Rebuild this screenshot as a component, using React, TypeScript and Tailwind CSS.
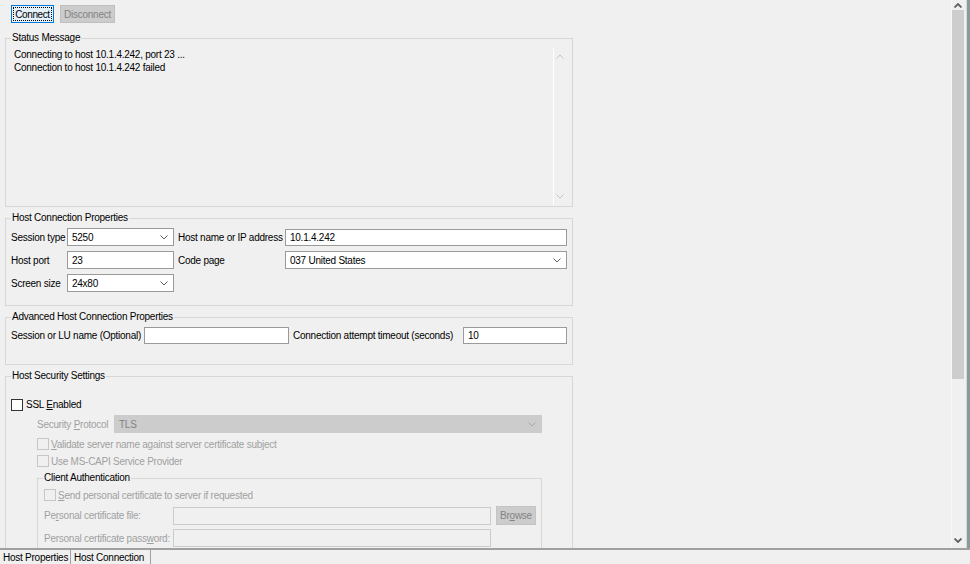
import React from 'react';

const FONT = { fontFamily: '"Liberation Sans", Arial, sans-serif' };

const Chevron: React.FC<{ up?: boolean; color?: string; bold?: boolean }> = ({ up, color = '#606060', bold }) => (
  <svg width="8" height="5" viewBox="0 0 8 5" className="block">
    <path
      d={up ? 'M0.5 4.5 L4 1 L7.5 4.5' : 'M0.5 0.5 L4 4 L7.5 0.5'}
      fill="none"
      stroke={color}
      strokeWidth={bold ? 1.8 : 1}
    />
  </svg>
);

const Select: React.FC<{ value: string; className: string; disabled?: boolean }> = ({ value, className, disabled }) => (
  <div
    className={
      'flex items-center justify-between pl-[4px] pr-[5px] border ' +
      (disabled ? 'bg-[#cccccc] border-[#cccccc] text-[#838383] ' : 'bg-white border-[#9a9a9a] ') +
      className
    }
  >
    <span>{value}</span>
    <Chevron color={disabled ? '#a8a8a8' : '#606060'} />
  </div>
);

const Input: React.FC<{ value?: string; className: string; disabled?: boolean }> = ({ value, className, disabled }) => (
  <div
    className={
      'flex items-center pl-[4px] border ' +
      (disabled ? 'bg-[#f0f0f0] border-[#cccccc] ' : 'bg-white border-[#9a9a9a] ') +
      className
    }
  >
    {value}
  </div>
);

const Check: React.FC<{ disabled?: boolean }> = ({ disabled }) => (
  <div
    className={
      'w-[12px] h-[12px] border shrink-0 ' +
      (disabled ? 'border-[#c6c6c6] bg-[#f0f0f0]' : 'border-[#333333] bg-white')
    }
  />
);

const Group: React.FC<{ title: string; className?: string; children: React.ReactNode }> = ({ title, className, children }) => (
  <fieldset className={'border border-[#d7d7d7] ' + (className || '')}>
    <legend className="ml-[5px] px-[1px] leading-[14px]">{title}</legend>
    {children}
  </fieldset>
);

export default function App() {
  return (
    <div className="w-[970px] h-[564px] flex flex-col bg-[#f0f0f0] text-black text-[10px] tracking-[-0.25px] whitespace-nowrap overflow-hidden" style={FONT}>
      <div className="flex flex-1 min-h-0">
        {/* main content */}
        <div className="w-[951px] overflow-hidden pl-[5px]">
          <div className="flex gap-[6px] mt-[5px] ml-[6px] h-[18px]">
            <div className="w-[43px] h-[18px] border border-[#0078d7] bg-[#e5f1fb] p-[1px]">
              <div className="w-full h-full border border-dotted border-black flex items-center justify-center tracking-[-0.4px]">
                Connect
              </div>
            </div>
            <div className="w-[55px] h-[18px] border border-[#bfbfbf] bg-[#cccccc] text-[#838383] flex items-center justify-center">
              Disconnect
            </div>
          </div>

          <Group title="Status Message" className="w-[568px] mt-[8px]">
            <div className="flex h-[161px]">
              <div className="flex-1 pl-[8px] pt-[3px] leading-[13px]">
                <div>Connecting to host 10.1.4.242, port 23 ...</div>
                <div>Connection to host 10.1.4.242 failed</div>
              </div>
              <div className="w-[12px] mr-[7px] mt-[3px] mb-[1px] border-l border-white flex flex-col items-center justify-between py-[6px]">
                <Chevron up color="#c4c4c4" />
                <Chevron color="#c4c4c4" />
              </div>
            </div>
          </Group>

          <Group title="Host Connection Properties" className="w-[568px] mt-[4px]">
            <div className="h-[80px] pl-[5px] pt-[3px] flex flex-col gap-[5px]">
              <div className="flex items-center h-[18px]">
                <div className="w-[56px]">Session type</div>
                <Select value="5250" className="w-[107px] h-[18px]" />
                <div className="w-[107px] ml-[4px]">Host name or IP address</div>
                <Input value="10.1.4.242" className="w-[282px] h-[17px]" />
              </div>
              <div className="flex items-center h-[18px]">
                <div className="w-[56px]">Host port</div>
                <Input value="23" className="w-[107px] h-[18px]" />
                <div className="w-[107px] ml-[4px]">Code page</div>
                <Select value="037 United States" className="w-[282px] h-[18px]" />
              </div>
              <div className="flex items-center h-[18px]">
                <div className="w-[56px]">Screen size</div>
                <Select value="24x80" className="w-[107px] h-[18px]" />
              </div>
            </div>
          </Group>

          <Group title="Advanced Host Connection Properties" className="w-[568px] mt-[4px]">
            <div className="h-[40px] pl-[5px] pt-[3px]">
              <div className="flex items-center h-[17px]">
                <div className="w-[133px]">Session or LU name (Optional)</div>
                <Input className="w-[145px] h-[17px]" />
                <div className="w-[170px] ml-[4px]">Connection attempt timeout (seconds)</div>
                <Input value="10" className="w-[104px] h-[17px]" />
              </div>
            </div>
          </Group>

          <Group title="Host Security Settings" className="w-[568px] mt-[4px]">
            <div className="h-[300px] pl-[5px]">
              <div className="flex items-center h-[13px] mt-[15px]">
                <Check />
                <span className="ml-[3px]">
                  SSL <span className="underline">E</span>nabled
                </span>
              </div>

              <div className="ml-[26px] text-[#a0a0a0]">
                <div className="flex items-center h-[18px] mt-[4px]">
                  <div className="w-[77px]">
                    Security <span className="underline">P</span>rotocol
                  </div>
                  <Select value="TLS" disabled className="w-[428px] h-[18px]" />
                </div>
                <div className="flex items-center h-[12px] mt-[5px]">
                  <Check disabled />
                  <span className="ml-[2px]">
                    <span className="underline">V</span>alidate server name against server certificate subject
                  </span>
                </div>
                <div className="flex items-center h-[12px] mt-[5px]">
                  <Check disabled />
                  <span className="ml-[2px]">Use MS-CAPI Service Provider</span>
                </div>

                <Group title="Client Authentication" className="w-[505px] mt-[4px] text-black">
                  <div className="pl-[6px] h-[120px] text-[#a0a0a0]">
                    <div className="flex items-center h-[12px] mt-[4px]">
                      <Check disabled />
                      <span className="ml-[2px]">
                        <span className="underline">S</span>end personal certificate to server if requested
                      </span>
                    </div>
                    <div className="flex items-center h-[19px] mt-[5px]">
                      <div className="w-[129px]">
                        Pe<span className="underline">r</span>sonal certificate file:
                      </div>
                      <Input disabled className="w-[318px] h-[18px]" />
                      <div className="ml-[5px] w-[40px] h-[19px] bg-[#cccccc] border border-[#c4c4c4] flex items-center justify-center text-[#838383]">
                        Br<span className="underline">o</span>wse
                      </div>
                    </div>
                    <div className="flex items-center h-[18px] mt-[4px]">
                      <div className="w-[129px]">
                        Personal certificate pass<span className="underline">w</span>ord:
                      </div>
                      <Input disabled className="w-[318px] h-[18px]" />
                    </div>
                  </div>
                </Group>
              </div>
            </div>
          </Group>
        </div>

        {/* scrollbar */}
        <div className="w-[15px] flex flex-col border-l border-[#f7f7f7]">
          <div className="h-[10px] flex items-center justify-center pr-[2px]">
            <Chevron up bold />
          </div>
          <div className="h-[369px] w-[12px] bg-[#cdcdcd]" />
          <div className="flex-1 flex items-end justify-center pb-[5px] pr-[2px]">
            <Chevron bold />
          </div>
        </div>
        <div className="w-[1px] bg-[#d8d8d8]" />
        <div className="w-[3px] bg-[#8a9b9b]" />
      </div>

      {/* tabs */}
      <div className="h-[16px] border-t-2 border-[#a0a0a0] flex items-center">
        <div className="h-full flex items-center pl-[3px] w-[71px] border-r border-[#a0a0a0]">
          Host Properties
        </div>
        <div className="h-full flex items-center pl-[3px] w-[80px] border-r border-[#a0a0a0]">
          Host Connection
        </div>
      </div>
    </div>
  );
}
